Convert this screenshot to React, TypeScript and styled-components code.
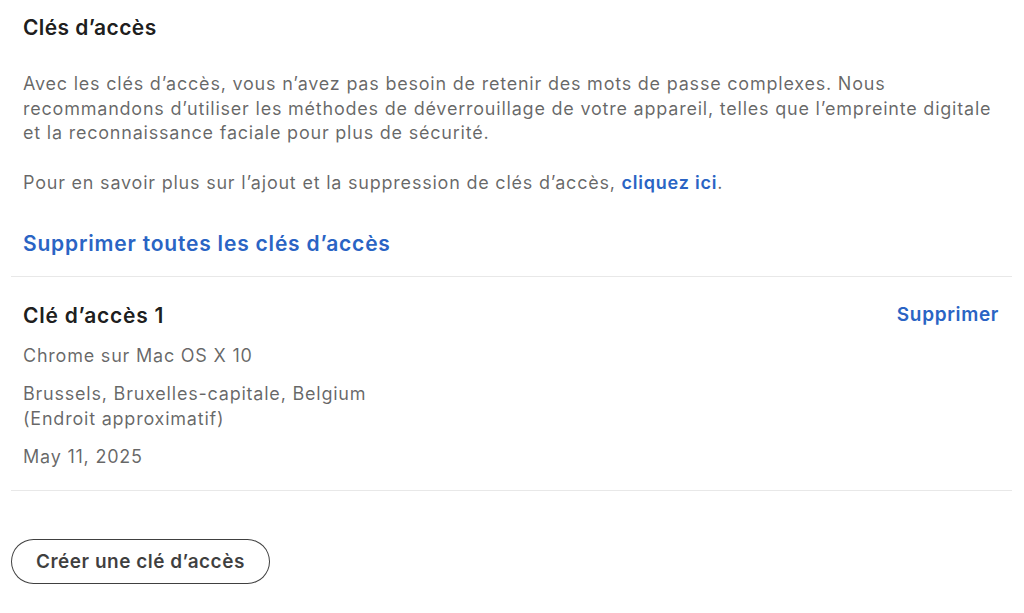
import React from "react";
import styled, { createGlobalStyle } from "styled-components";

const Global = createGlobalStyle`
  html, body { margin: 0; padding: 0; background: #fff; }
  body { font-family: Inter, "Noto Sans", sans-serif; -webkit-font-smoothing: antialiased; }
`;

const Page = styled.div`
  width: 1024px;
  height: 613px;
  box-sizing: border-box;
  padding: 0 12px 0 11px;
  display: flex;
  flex-direction: column;
`;

const Header = styled.section`
  padding: 14px 12px 0 12px;
  display: flex;
  flex-direction: column;
`;

const Title = styled.h2`
  margin: 0;
  font-size: 21px;
  line-height: 28px;
  font-weight: 600;
  color: rgba(0, 0, 0, 0.9);
  letter-spacing: 0.4px;
`;

const Para = styled.p<{ $top: number }>`
  margin: ${(p) => p.$top}px 0 0 0;
  font-size: 18px;
  line-height: 24.5px;
  font-weight: 400;
  letter-spacing: 0.78px;
  white-space: nowrap;
  color: rgba(0, 0, 0, 0.6);
`;

const Link = styled.a`
  color: #2a64c4;
  font-weight: 600;
  text-decoration: none;
`;

const BigLink = styled.a`
  margin-top: 35px;
  font-size: 21px;
  line-height: 28px;
  font-weight: 600;
  letter-spacing: 0.8px;
  color: #2a64c4;
  text-decoration: none;
  align-self: flex-start;
`;

const Divider = styled.hr<{ $top: number }>`
  margin: ${(p) => p.$top}px 0 0 0;
  border: none;
  border-top: 1px solid #e8e8e8;
  width: 100%;
`;

const KeyRow = styled.div`
  display: flex;
  justify-content: space-between;
  align-items: flex-start;
  padding: 25px 13px 21px 12px;
`;

const KeyInfo = styled.div`
  display: flex;
  flex-direction: column;
`;

const KeyTitle = styled.h3`
  margin: 0;
  font-size: 21px;
  line-height: 28px;
  font-weight: 600;
  letter-spacing: 0.75px;
  color: rgba(0, 0, 0, 0.9);
`;

const Meta = styled.div`
  margin-top: 13px;
  font-size: 18px;
  line-height: 25px;
  letter-spacing: 0.78px;
  color: rgba(0, 0, 0, 0.6);
`;

const RemoveButton = styled.button`
  background: none;
  border: none;
  padding: 0;
  margin-top: 0;
  font-family: inherit;
  font-size: 19px;
  line-height: 26px;
  font-weight: 600;
  letter-spacing: 0.65px;
  color: #2a64c4;
  cursor: pointer;
`;

const Footer = styled.div`
  padding-top: 48px;
`;

const CreateButton = styled.button`
  box-sizing: border-box;
  height: 45px;
  padding: 0 24px;
  border: 1px solid rgba(0, 0, 0, 0.75);
  border-radius: 23px;
  background: #fff;
  font-family: inherit;
  font-size: 19px;
  font-weight: 600;
  letter-spacing: 0.5px;
  color: rgba(0, 0, 0, 0.75);
  cursor: pointer;
`;

export default function App() {
  return (
    <>
      <Global />
      <Page>
        <Header>
          <Title>Clés d’accès</Title>
          <Para $top={30}>
            Avec les clés d’accès, vous n’avez pas besoin de retenir des mots de passe complexes. Nous
            <br />
            recommandons d’utiliser les méthodes de déverrouillage de votre appareil, telles que l’empreinte digitale
            <br />
            et la reconnaissance faciale pour plus de sécurité.
          </Para>
          <Para $top={25}>
            Pour en savoir plus sur l’ajout et la suppression de clés d’accès, <Link href="#">cliquez ici</Link>.
          </Para>
          <BigLink href="#">Supprimer toutes les clés d’accès</BigLink>
        </Header>
        <Divider $top={18} />
        <KeyRow>
          <KeyInfo>
            <KeyTitle>Clé d’accès 1</KeyTitle>
            <Meta>Chrome sur Mac OS X 10</Meta>
            <Meta>
              Brussels, Bruxelles-capitale, Belgium
              <br />
              (Endroit approximatif)
            </Meta>
            <Meta>May 11, 2025</Meta>
          </KeyInfo>
          <RemoveButton>Supprimer</RemoveButton>
        </KeyRow>
        <Divider $top={0} />
        <Footer>
          <CreateButton>Créer une clé d’accès</CreateButton>
        </Footer>
      </Page>
    </>
  );
}
